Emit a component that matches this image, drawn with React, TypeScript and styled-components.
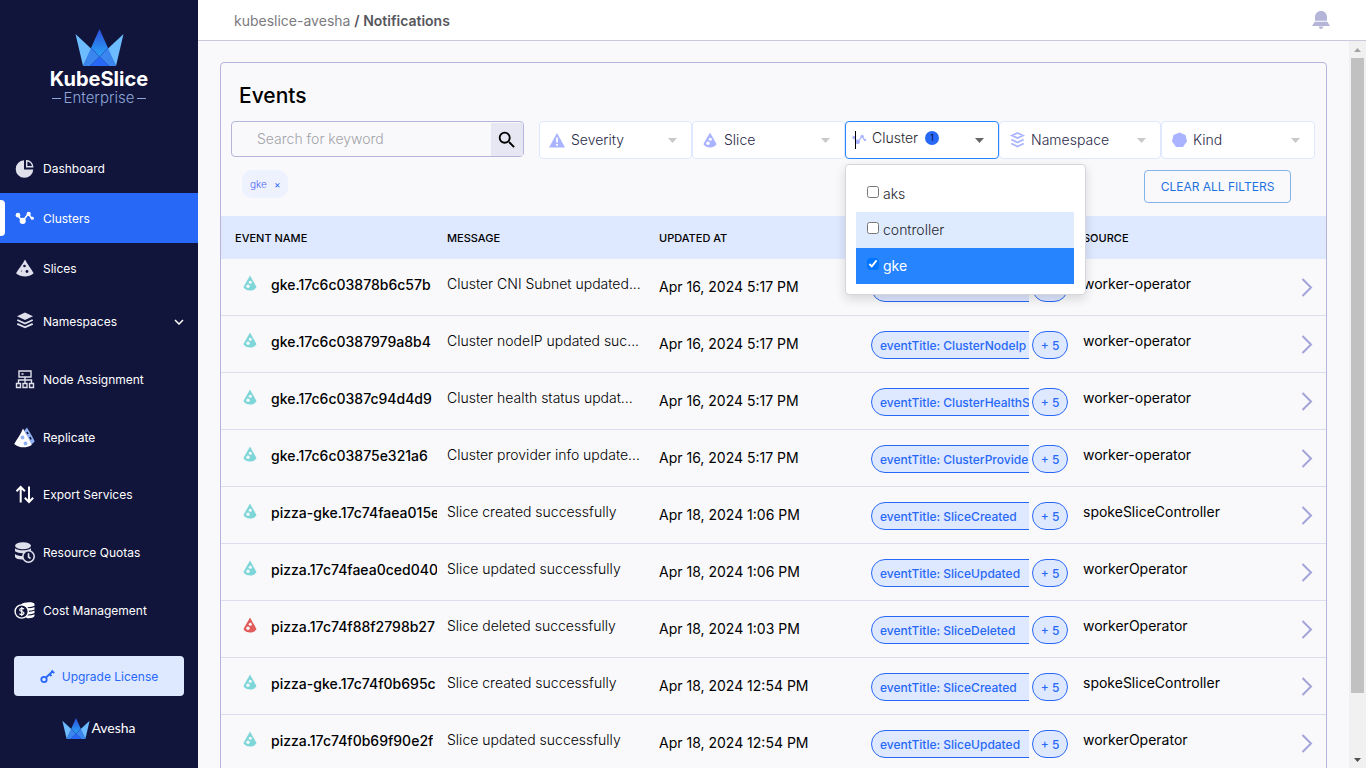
import React from 'react';
import styled, { createGlobalStyle } from 'styled-components';
import { MdSearch } from 'react-icons/md';

const font = '"Inter", "Liberation Sans", sans-serif';

const GlobalStyle = createGlobalStyle`
  *, *::before, *::after { box-sizing: border-box; }
  body { margin: 0; background: #f9f9fc; font-family: ${font}; color: #000; }
  button, input, select { font-family: inherit; margin: 0; }
  h1, ul { margin: 0; padding: 0; }
  svg { display: block; flex: none; }
`;

const Shell = styled.div`
  display: flex;
  height: 100vh;
  overflow: hidden;
`;

/* ---------- sidebar ---------- */
const Sidebar = styled.aside`
  flex: none;
  width: 198px;
  background: #11143b;
  color: #fff;
  display: flex;
  flex-direction: column;
  overflow: hidden;
`;

const Brand = styled.div`
  height: 143px;
  flex: none;
  padding-top: 29px;
  display: flex;
  flex-direction: column;
  align-items: center;
`;

const BrandName = styled.div`
  padding-top: 2px;
  font-size: 20px;
  line-height: 22px;
  font-weight: 700;
`;

const BrandEdition = styled.div`
  display: flex;
  align-items: center;
  gap: 3px;
  font-size: 15px;
  line-height: 16px;
  font-weight: 300;
  color: #8ea6d8;
  &::before, &::after {
    content: '';
    width: 9px;
    height: 1px;
    background: #8ea6d8;
  }
`;

const NavGroup = styled.ul<{ $tall?: boolean }>`
  flex: none;
  list-style: none;
  display: flex;
  flex-direction: column;
  height: ${p => (p.$tall ? '346px' : '150px')};
  & > li { flex: 1; display: flex; }
`;

const NavLink = styled.a<{ $active?: boolean }>`
  flex: 1;
  display: flex;
  align-items: center;
  gap: 8px;
  padding: 0 14px;
  position: relative;
  color: #fff;
  text-decoration: none;
  font-size: 12px;
  background: ${p => (p.$active ? '#2868f7' : 'transparent')};
  &::before {
    content: '';
    display: ${p => (p.$active ? 'block' : 'none')};
    position: absolute;
    left: 0;
    top: 7px;
    bottom: 7px;
    width: 5px;
    background: #fff;
    border-radius: 0 4px 4px 0;
  }
  & > span { flex: 1; }
`;

const UpgradeButton = styled.button`
  flex: none;
  margin: 17px 14px 0;
  height: 40px;
  border: 0;
  border-radius: 4px;
  background: #dee8ff;
  color: #2868f7;
  font-size: 12px;
  display: flex;
  align-items: center;
  justify-content: center;
  gap: 7px;
`;

const Maker = styled.div`
  flex: none;
  display: flex;
  align-items: center;
  justify-content: center;
  margin-top: 21px;
  gap: 1px;
  font-family: Lato, sans-serif;
  font-size: 14px;
  line-height: 22px;
`;

/* ---------- top bar and page ---------- */
const Main = styled.div`
  flex: 1;
  min-width: 0;
  display: flex;
  flex-direction: column;
`;

const TopBar = styled.header`
  flex: none;
  height: 41px;
  background: #fff;
  border-bottom: 1px solid #c9c9dc;
  display: flex;
  align-items: center;
  justify-content: space-between;
  padding: 0 36px;
`;

const Crumbs = styled.nav`
  font-size: 14px;
  color: #56565c;
  a { color: #7b7b80; text-decoration: none; }
  b { font-weight: 600; }
`;

const IconButton = styled.button`
  border: 0;
  padding: 0;
  background: none;
  display: flex;
`;

const Body = styled.div`
  flex: 1;
  min-height: 0;
  display: flex;
`;

const Content = styled.main`
  flex: 1;
  min-width: 0;
  overflow: hidden;
  padding: 21px 22px 0;
`;

const ScrollTrack = styled.div`
  flex: none;
  width: 17px;
  background: #f1f1f1;
  display: flex;
  flex-direction: column;
  align-items: center;
`;

const ScrollThumb = styled.div`
  width: 13px;
  height: 91.6%;
  background: #c1c1c1;
`;

const ScrollRail = styled.div`
  flex: 1;
  min-height: 0;
`;

const ScrollArrow = styled.div`
  flex: none;
  height: 17px;
  display: flex;
  align-items: center;
`;

const Card = styled.section`
  border: 1px solid #b5b5dc;
  border-radius: 4px;
`;

const Title = styled.h1`
  padding: 19px 18px 11px;
  font-size: 21px;
  line-height: 28px;
  font-weight: 500;
`;

const Toolbar = styled.div`
  display: flex;
  align-items: flex-start;
  gap: 15px;
  padding: 0 11px 0 10px;
`;

const SearchBox = styled.form`
  flex: none;
  width: 293px;
  height: 36px;
  display: flex;
  border: 1px solid #b5b5dc;
  border-radius: 4px;
  padding-top: 1px;
  input {
    flex: 1;
    min-width: 0;
    border: 0;
    background: none;
    outline: 0;
    padding: 0 8px 2px 25px;
    font-size: 14px;
    font-weight: 300;
  }
  input::placeholder { color: #a3a3a8; opacity: 1; }
  button {
    width: 32px;
    border: 0;
    padding: 0;
    background: #e6e7f3;
    display: flex;
    align-items: center;
    justify-content: center;
  }
`;

const Filters = styled.div`
  flex: 1;
  min-width: 0;
  display: grid;
  grid-template-columns: 153fr 153fr 154fr 162fr 154fr;
`;

const FilterCell = styled.div<{ $open?: boolean }>`
  position: relative;
  height: 38px;
  display: flex;
  align-items: center;
  gap: 5px;
  padding: 0 14px 0 ${p => (p.$open ? '5px' : '8px')};
  background: #fff;
  border: 1px solid ${p => (p.$open ? '#2684ff' : '#dfe8ff')};
  border-radius: 4px;
`;

const FilterIcon = styled.span`
  flex: none;
  width: 18px;
  display: flex;
  justify-content: center;
`;

const FilterSelect = styled.select`
  flex: 1;
  min-width: 0;
  appearance: none;
  border: 0;
  padding: 0 0 2px;
  background: none;
  font-size: 14px;
  font-weight: 300;
  color: #2a2a4a;
`;

const FilterButton = styled.button`
  flex: 1;
  display: flex;
  align-items: center;
  gap: 7px;
  border: 0;
  padding: 0 0 5px;
  background: none;
  font-size: 14px;
  font-weight: 300;
  color: #26262e;
`;

const Count = styled.span`
  width: 14px;
  height: 14px;
  border-radius: 7px;
  background: #2868f7;
  color: #000;
  font-size: 9px;
  line-height: 14px;
  text-align: center;
`;

const TextCaret = styled.span`
  position: absolute;
  left: 9px;
  top: 9px;
  width: 1px;
  height: 18px;
  background: #000;
`;

const Menu = styled.ul`
  position: absolute;
  z-index: 2;
  top: 42px;
  left: -1px;
  width: 241px;
  list-style: none;
  padding: 11px 11px 10px 10px;
  background: #fff;
  border: 1px solid #d6d6da;
  border-radius: 4px;
  box-shadow: 0 4px 11px rgba(0, 0, 0, 0.14);
`;

const Option = styled.label<{ $focus?: boolean; $checked?: boolean }>`
  height: 36px;
  display: flex;
  align-items: center;
  gap: 4px;
  padding: 0 11px 2px;
  font-size: 14px;
  font-weight: ${p => (p.$checked ? 400 : 300)};
  color: ${p => (p.$checked ? '#fff' : '#26262e')};
  background: ${p => (p.$checked ? '#2684ff' : p.$focus ? '#deebff' : 'transparent')};
  input { width: 12px; height: 12px; margin: 0 0 3px; accent-color: #0075ff; }
`;

const ActiveRow = styled.div`
  display: flex;
  align-items: flex-start;
  justify-content: space-between;
  padding: 11px 35px 13px 21px;
`;

const Chip = styled.span`
  display: flex;
  align-items: center;
  gap: 7px;
  height: 28px;
  padding: 0 7px 0 8px;
  border-radius: 10px;
  background: #eef2ff;
  font-size: 10px;
  font-weight: 300;
  color: #4d63f2;
  button {
    border: 0;
    padding: 0;
    background: none;
    color: #2868f7;
    font-size: 10px;
    line-height: 12px;
  }
`;

const ClearButton = styled.button`
  height: 33px;
  width: 147px;
  padding: 0;
  border: 1px solid #84b3ea;
  border-radius: 4px;
  background: none;
  color: #1f71dc;
  font-size: 12px;
`;

/* ---------- events table ---------- */
const Table = styled.table`
  width: 100%;
  table-layout: fixed;
  border-spacing: 0;
  th {
    height: 43px;
    padding: 0 0 0 14px;
    background: #dee8ff;
    text-align: left;
    font-size: 11px;
    font-weight: 500;
  }
  th:last-child { width: 45px; }
`;

const Cell = styled.td<{ $raise?: number; $action?: boolean }>`
  height: 57px;
  padding: 0 0 ${p => p.$raise || 0}px ${p => (p.$action ? 20 : 14)}px;
  border-bottom: 1px solid #dcdef0;
  font-size: 14px;
  line-height: 20px;
  white-space: nowrap;
`;

const EventName = styled.div`
  display: flex;
  align-items: center;
  gap: 14px;
  padding-left: 8px;
  font-weight: 500;
  svg { margin-bottom: 5px; }
  span { overflow: hidden; margin-right: -4px; }
`;

const Message = styled.div`
  font-weight: 300;
`;

const Tags = styled.div`
  display: flex;
  gap: 3px;
  padding-top: 2px;
`;

const TagClip = styled.div`
  width: 158px;
  overflow: hidden;
`;

const Tag = styled.span<{ $count?: boolean }>`
  display: block;
  min-width: ${p => (p.$count ? '36px' : '190px')};
  height: 28px;
  padding: 0 ${p => (p.$count ? '0' : '8px')};
  border: 1px solid #2868f7;
  border-radius: 14px;
  background: #dee8ff;
  color: #2868f7;
  font-size: 12px;
  font-weight: 500;
  line-height: 28px;
  text-align: ${p => (p.$count ? 'center' : 'left')};
`;

/* ---------- drawings ---------- */
const Crown = ({ w, h, id }: { w: number; h: number; id: string }) => (
  <svg width={w} height={h} viewBox="0 0 49 37" aria-hidden="true">
    <defs>
      <linearGradient id={id} x1="0" y1="0" x2="0" y2="1">
        <stop offset="0" stopColor="#2c4fdc" />
        <stop offset="1" stopColor="#2aa5f7" />
      </linearGradient>
    </defs>
    <path d="M.5 5 16.500 20 8 37Z" fill="#6cbcff" />
    <path d="M48.500 5 32.500 20 41 37Z" fill="#6cbcff" />
    <path d="M24.500 0 33 19 24.500 28 16 19Z" fill={`url(#${id})`} />
    <path d="M16 19 24.500 28 15 37H8Z" fill="#3b85ef" />
    <path d="M33 19 24.500 28 34 37h7Z" fill="#3b85ef" />
    <path d="M24.500 27.500 34 37H15Z" fill="#2868f7" />
    <path d="M16 19 34 37M33 19 15 37" stroke="#2358cf" strokeWidth=".7" />
  </svg>
);

const Slice = ({ color, hole = '#f9f9fc' }: { color: string; hole?: string }) => (
  <svg width="14" height="16" viewBox="0 0 14 16" aria-hidden="true">
    <path d="M7 .5C8.500 3.500 12.500 9.500 13.500 12.300 12 14.600 9.700 15.500 7 15.500S2 14.600.5 12.300C1.500 9.500 5.500 3.500 7 .5Z" fill={color} />
    <circle cx="7.300" cy="7.200" r="1.500" fill={hole} />
    <circle cx="5" cy="11.300" r="1.700" fill={hole} />
  </svg>
);

const Caret = ({ color }: { color: string }) => (
  <svg width="9" height="5" viewBox="0 0 9 5" aria-hidden="true">
    <path d="M0 0h9L4.500 5Z" fill={color} />
  </svg>
);

const Nodes = ({ color, w }: { color: string; w: number }) => (
  <svg width={w} height={w} viewBox="0 0 20 20" aria-hidden="true" fill={color}>
    <path d="M3.500 6.500 8 13 13.500 5.500 17.500 10.500" fill="none" stroke={color} strokeWidth="1.500" />
    <circle cx="3.800" cy="6.800" r="2.200" />
    <circle cx="8.300" cy="12.300" r="2.900" />
    <circle cx="14" cy="5.500" r="2" />
    <circle cx="17.500" cy="9.800" r="1.500" />
  </svg>
);

const NavSvg = ({ children }: { children: React.ReactNode }) => (
  <svg width="21" height="21" viewBox="0 0 21 21" aria-hidden="true" fill="none">
    {children}
  </svg>
);

const light = '#dfe0ec';
const navy = '#11143b';

const icons = {
  dashboard: (
    <NavSvg>
      <path d="M10 2.200A8.800 8.800 0 1 0 19.300 11.500H10Z" fill={light} />
      <path d="M12.700 2.700v6h6c-.3-3.300-2.800-5.800-6-6Z" stroke={light} strokeWidth="1.400" />
    </NavSvg>
  ),
  clusters: <Nodes color="#fff" w={21} />,
  slices: (
    <NavSvg>
      <path d="M11 1.500C13 5.500 18 12 19.700 15.300 17 17.700 14 18.500 11 18.500S4.500 17.700 2 15.300C4 12 9 5.500 11 1.500Z" fill={light} />
      <circle cx="10.500" cy="8" r="1.300" fill={navy} />
      <circle cx="13" cy="13.500" r="1.400" fill={navy} />
      <circle cx="7.500" cy="13" r=".5" fill={navy} />
    </NavSvg>
  ),
  namespaces: (
    <NavSvg>
      <path d="m11 1.500 8 3.700-8 3.700-8-3.700Z" fill={light} />
      <path d="m3.300 9 7.700 3.500L18.700 9M3.300 12.800 11 16.300l7.700-3.500" stroke={light} strokeWidth="1.900" />
    </NavSvg>
  ),
  nodes: (
    <NavSvg>
      <path d="M5 2h12v6H5ZM11 8v6M4.500 14v-3h13v3M2.500 14.500h4v4h-4ZM9 14.500h4v4H9ZM15.500 14.500h4v4h-4ZM7.500 5h2" stroke={light} strokeWidth="1.400" />
    </NavSvg>
  ),
  replicate: (
    <NavSvg>
      <path d="M13 .5C15 4 19 10 20.700 14.500L17.500 17.500 10 4Z" fill="#8fb0f2" />
      <path d="M9 1.500C11 6 16 13 17.800 18 12 21.500 5 21 .2 17 3 12 7 7 9 1.500Z" fill="#fff" />
      <circle cx="8.500" cy="10.500" r="1.900" fill="#8fb0f2" />
      <circle cx="11.500" cy="16.500" r="1.900" fill="#8fb0f2" />
      <path d="M13 5l1 2M16 10l1 2.500" stroke={navy} strokeWidth="1.600" />
    </NavSvg>
  ),
  exports: (
    <NavSvg>
      <path d="M6.700 18.500V3.500M2.500 7.200 6.700 3 10.900 7.200M15 2.500v15M10.800 13.800 15 18l4.200-4.200" stroke="#fff" strokeWidth="2" />
    </NavSvg>
  ),
  quotas: (
    <NavSvg>
      <ellipse cx="9" cy="3.800" rx="8" ry="3.500" fill={light} />
      <path d="M1 6.300c3 2.700 13 2.700 16 0v3c-3 2.500-13 2.500-16 0ZM1 12c2 1.800 5 2.100 8 2v3.500c-4 .2-7-.6-8-2.500Z" fill={light} />
      <circle cx="14.500" cy="14.500" r="5.700" fill={navy} stroke={light} strokeWidth="1.600" />
      <path d="M14.500 11.300v3.700l2 1.500" stroke={light} strokeWidth="1.600" />
    </NavSvg>
  ),
  cost: (
    <NavSvg>
      <path d="M7 4.500C9 1.800 20.500 1.500 20.500 4v12c-1 2-5 2.500-8 2Z" fill="#fff" />
      <path d="M11 7.500c4 .6 7 .2 10-1.200M13 11.300c3 .2 5.500-.3 8-1.400M13 15c3 .2 5.500-.3 8-1.400" stroke={navy} strokeWidth="1.100" />
      <circle cx="7.700" cy="11.500" r="6.600" fill={navy} stroke="#fff" strokeWidth="1.400" />
      <path d="M10 9.200C9 8 5.700 8 5.700 9.900c0 2 4.300 1.200 4.300 3.200 0 1.900-3.500 1.900-4.600.5M7.800 7v9" stroke="#fff" strokeWidth="1.200" />
    </NavSvg>
  ),
};

const Warning = () => (
  <svg width="18" height="16" viewBox="0 0 18 16" aria-hidden="true">
    <path d="M9 1 17 15.500H1Z" fill="#a9b3ff" />
    <path d="M9 5.500v5M9 12v1.800" stroke="#fff" strokeWidth="1.800" />
  </svg>
);

const Layers = () => (
  <svg width="17" height="18" viewBox="0 0 17 18" aria-hidden="true" fill="none" stroke="#a9b3ff" strokeWidth="1.700">
    <path d="m8.500 2 5.500 2.500L8.500 7 3 4.500ZM2.300 8.500l6.200 3 6.200-3M2.300 12.500l6.200 3 6.200-3" />
  </svg>
);

const Heptagon = () => (
  <svg width="17" height="18" viewBox="0 0 17 18" aria-hidden="true">
    <path d="m8.500 1.500 6 2.500 1.500 6.300-4 5.700H5l-4-5.700L2.500 4Z" fill="#a9b3ff" />
  </svg>
);

const Key = () => (
  <svg width="15" height="15" viewBox="0 0 15 15" aria-hidden="true" fill="none" stroke="#2868f7" strokeWidth="1.800">
    <circle cx="4" cy="10.500" r="2.700" />
    <path d="M6 8.500 12.500 2.500M9.500 5l2 2M11.500 1.500l2.700 2.700" />
  </svg>
);

const Bell = () => (
  <svg width="18" height="18" viewBox="0 0 18 18" aria-hidden="true" fill="#b4b5d9">
    <path d="M9 0C12.600 0 15 2.700 15 6v3.700H3V6C3 2.700 5.400 0 9 0ZM2.700 10.800h12.600L18 15H0Z" />
    <path d="M6.700 15.500h4.600c-.3 3.200-4.300 3.200-4.600 0Z" />
  </svg>
);

const ChevronRight = () => (
  <svg width="12" height="20" viewBox="0 0 12 20" aria-hidden="true" fill="none">
    <path d="M1.500 2 10 10.500l-8.500 8.500" stroke="#a2a3d8" strokeWidth="2" />
  </svg>
);

/* ---------- data ---------- */
const primaryNav = [
  { label: 'Dashboard', icon: icons.dashboard },
  { label: 'Clusters', icon: icons.clusters, active: true },
  { label: 'Slices', icon: icons.slices },
];

const secondaryNav = [
  { label: 'Namespaces', icon: icons.namespaces, expands: true },
  { label: 'Node Assignment', icon: icons.nodes },
  { label: 'Replicate', icon: icons.replicate },
  { label: 'Export Services', icon: icons.exports },
  { label: 'Resource Quotas', icon: icons.quotas },
  { label: 'Cost Management', icon: icons.cost },
];

const teal = '#7fd6d8';
const red = '#e25c5c';

const events = [
  ['gke.17c6c03878b6c57b', 'Cluster CNI Subnet updated...', 'Apr 16, 2024 5:17 PM', 'ClusterCNI', 'worker-operator', teal],
  ['gke.17c6c0387979a8b4', 'Cluster nodeIP updated suc...', 'Apr 16, 2024 5:17 PM', 'ClusterNodeIp', 'worker-operator', teal],
  ['gke.17c6c0387c94d4d9', 'Cluster health status updat...', 'Apr 16, 2024 5:17 PM', 'ClusterHealthS', 'worker-operator', teal],
  ['gke.17c6c03875e321a6', 'Cluster provider info update...', 'Apr 16, 2024 5:17 PM', 'ClusterProvide', 'worker-operator', teal],
  ['pizza-gke.17c74faea015e', 'Slice created successfully', 'Apr 18, 2024 1:06 PM', 'SliceCreated', 'spokeSliceController', teal],
  ['pizza.17c74faea0ced040', 'Slice updated successfully', 'Apr 18, 2024 1:06 PM', 'SliceUpdated', 'workerOperator', teal],
  ['pizza.17c74f88f2798b27', 'Slice deleted successfully', 'Apr 18, 2024 1:03 PM', 'SliceDeleted', 'workerOperator', red],
  ['pizza-gke.17c74f0b695c', 'Slice created successfully', 'Apr 18, 2024 12:54 PM', 'SliceCreated', 'spokeSliceController', teal],
  ['pizza.17c74f0b69f90e2f', 'Slice updated successfully', 'Apr 18, 2024 12:54 PM', 'SliceUpdated', 'workerOperator', teal],
];

type NavEntry = { label: string; icon: React.ReactNode; active?: boolean; expands?: boolean };

const NavItem = ({ label, icon, active, expands }: NavEntry) => (
  <li>
    <NavLink href="#" $active={active} aria-current={active ? 'page' : undefined}>
      {icon}
      <span>{label}</span>
      {expands && (
        <svg width="10" height="6" viewBox="0 0 10 6" fill="none" aria-hidden="true">
          <path d="M1 1l4 4 4-4" stroke="#fff" strokeWidth="1.500" />
        </svg>
      )}
    </NavLink>
  </li>
);

const Filter = ({ name, icon }: { name: string; icon: React.ReactNode }) => (
  <FilterCell>
    <FilterIcon>{icon}</FilterIcon>
    <FilterSelect aria-label={name} defaultValue="">
      <option value="">{name}</option>
    </FilterSelect>
    <Caret color="#c9c9cc" />
  </FilterCell>
);

export default function App() {
  return (
    <Shell>
      <GlobalStyle />
      <Sidebar>
        <Brand>
          <Crown w={49} h={37} id="brandPeak" />
          <BrandName>KubeSlice</BrandName>
          <BrandEdition>Enterprise</BrandEdition>
        </Brand>
        <nav aria-label="Main">
          <NavGroup>
            {primaryNav.map(n => <NavItem key={n.label} {...n} />)}
          </NavGroup>
          <NavGroup $tall>
            {secondaryNav.map(n => <NavItem key={n.label} {...n} />)}
          </NavGroup>
        </nav>
        <UpgradeButton type="button">
          <Key />
          Upgrade License
        </UpgradeButton>
        <Maker>
          <Crown w={28} h={21} id="makerPeak" />
          Avesha
        </Maker>
      </Sidebar>

      <Main>
        <TopBar>
          <Crumbs aria-label="Breadcrumb">
            <a href="#">kubeslice-avesha</a> <b>/ Notifications</b>
          </Crumbs>
          <IconButton type="button" aria-label="Notifications">
            <Bell />
          </IconButton>
        </TopBar>
        <Body>
          <Content>
            <Card>
              <Title>Events</Title>
              <Toolbar>
                <SearchBox role="search" onSubmit={e => e.preventDefault()}>
                  <input type="text" aria-label="Search" placeholder="Search for keyword" />
                  <button type="submit" aria-label="Search">
                    <MdSearch size={22} />
                  </button>
                </SearchBox>
                <Filters>
                  <Filter name="Severity" icon={<Warning />} />
                  <Filter name="Slice" icon={<Slice color="#a9b3ff" hole="#fff" />} />
                  <FilterCell $open>
                    <Nodes color="#a9b3ff" w={16} />
                    <FilterButton type="button" aria-haspopup="listbox" aria-expanded="true">
                      Cluster <Count>1</Count>
                    </FilterButton>
                    <Caret color="#666" />
                    <TextCaret />
                    <Menu>
                      <li><Option><input type="checkbox" />aks</Option></li>
                      <li><Option $focus><input type="checkbox" />controller</Option></li>
                      <li><Option $checked><input type="checkbox" defaultChecked />gke</Option></li>
                    </Menu>
                  </FilterCell>
                  <Filter name="Namespace" icon={<Layers />} />
                  <Filter name="Kind" icon={<Heptagon />} />
                </Filters>
              </Toolbar>
              <ActiveRow>
                <Chip>
                  gke <button type="button" aria-label="Remove gke">×</button>
                </Chip>
                <ClearButton type="button">CLEAR ALL FILTERS</ClearButton>
              </ActiveRow>
              <Table>
                <thead>
                  <tr>
                    <th>EVENT NAME</th>
                    <th>MESSAGE</th>
                    <th>UPDATED AT</th>
                    <th aria-label="Tags" />
                    <th>SOURCE</th>
                    <th aria-label="Details" />
                  </tr>
                </thead>
                <tbody>
                  {events.map(([name, message, date, tag, source, color]) => (
                    <tr key={name}>
                      <Cell $raise={4}>
                        <EventName>
                          <Slice color={color} />
                          <span>{name}</span>
                        </EventName>
                      </Cell>
                      <Cell $raise={6}><Message>{message}</Message></Cell>
                      <Cell>{date}</Cell>
                      <Cell>
                        <Tags>
                          <TagClip><Tag>eventTitle: {tag}</Tag></TagClip>
                          <Tag $count>+ 5</Tag>
                        </Tags>
                      </Cell>
                      <Cell $raise={6}>{source}</Cell>
                      <Cell $action>
                        <IconButton type="button" aria-label="Open event">
                          <ChevronRight />
                        </IconButton>
                      </Cell>
                    </tr>
                  ))}
                </tbody>
              </Table>
            </Card>
          </Content>
          <ScrollTrack aria-hidden="true">
            <ScrollArrow>
              <svg width="7" height="4" viewBox="0 0 7 4"><path d="M0 4h7L3.500 0Z" fill="#a3a3a3" /></svg>
            </ScrollArrow>
            <ScrollRail>
              <ScrollThumb />
            </ScrollRail>
            <ScrollArrow>
              <svg width="7" height="4" viewBox="0 0 7 4"><path d="M0 0h7L3.500 4Z" fill="#505050" /></svg>
            </ScrollArrow>
          </ScrollTrack>
        </Body>
      </Main>
    </Shell>
  );
}
